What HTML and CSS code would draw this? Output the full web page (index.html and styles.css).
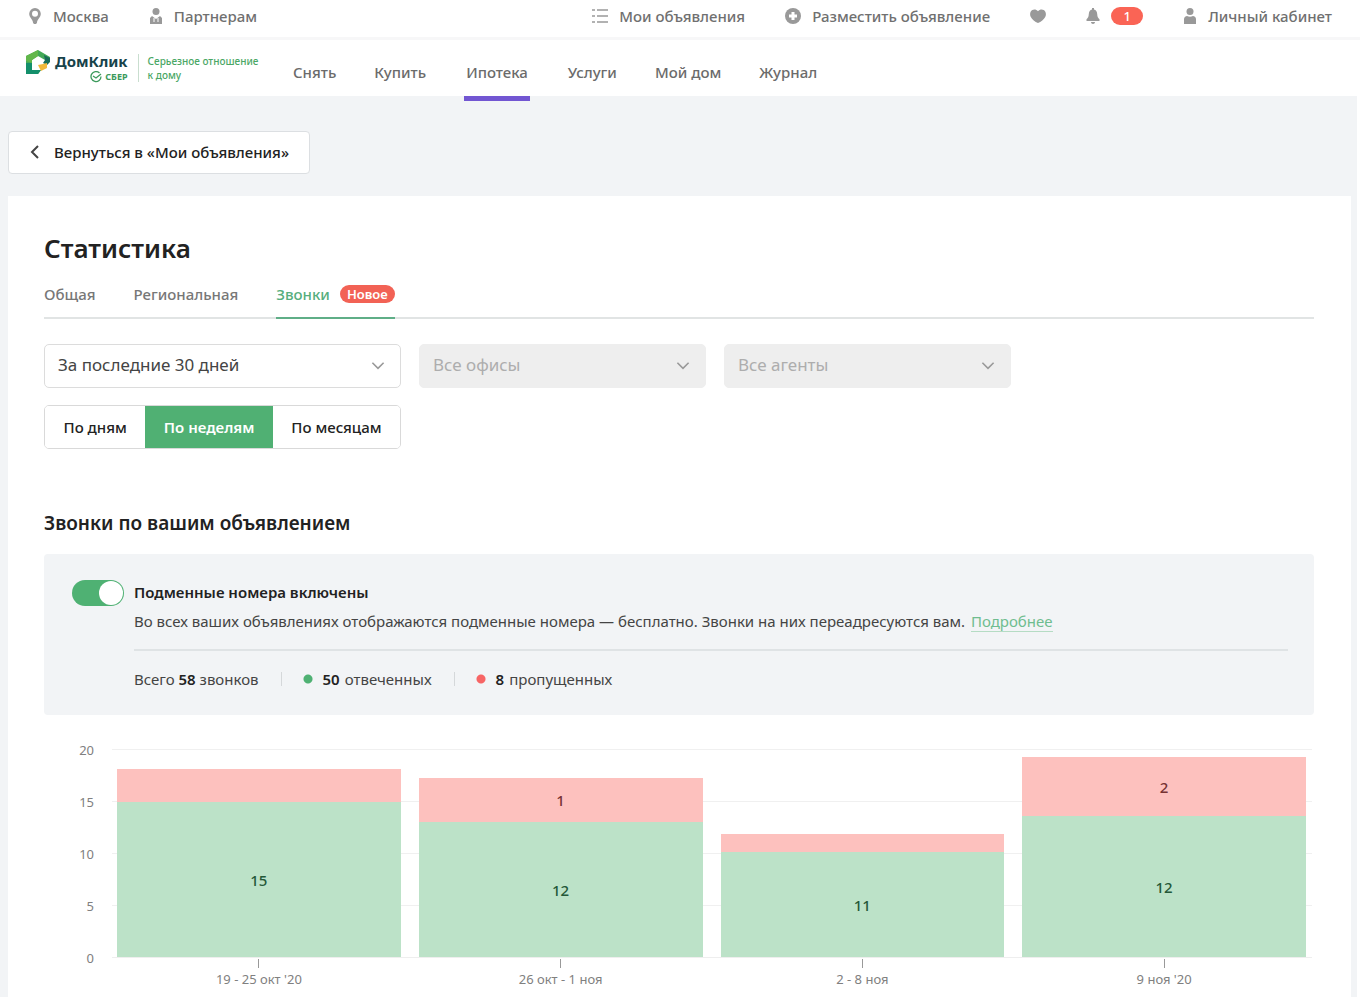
FILE: index.html
```html
<!DOCTYPE html>
<html lang="ru">
<head>
<meta charset="utf-8">
<meta name="viewport" content="width=device-width, initial-scale=1">
<title>ДомКлик — Статистика</title>
<link rel="stylesheet" href="styles.css">
</head>
<body>
<header>
  <div class="topbar">
    <a class="toplink" href="#"><svg width="14" height="16" viewBox="0 0 14 16"><path fill="#999" fill-rule="evenodd" d="M7 0a5.800 5.800 0 0 1 5.800 5.800C12.800 9.500 9.300 11.500 9 14.500c0 .9-.7 1.500-2 1.500s-2-.6-2-1.500C4.700 11.500 1.200 9.500 1.200 5.800A5.800 5.800 0 0 1 7 0zm0 2.800a3 3 0 1 0 0 6 3 3 0 0 0 0-6z"/></svg>Москва</a>
    <a class="toplink" href="#"><svg width="14" height="16" viewBox="0 0 14 16"><circle cx="7" cy="3.500" r="3.500" fill="#999"/><path fill="#999" d="M3 8l4 3 4-3 2 2v6H1v-6z"/><path d="M5 10v4M9 10v4" stroke="#fff"/></svg>Партнерам</a>
    <nav class="account">
      <a class="toplink" href="#"><svg width="16" height="16" viewBox="0 0 16 16"><path d="M0 2h3M0 8h3M0 14h3M5 2h11M5 8h11M5 14h11" stroke="#999" stroke-width="1.500"/></svg>Мои объявления</a>
      <a class="toplink" href="#"><svg width="16" height="16" viewBox="0 0 16 16"><circle cx="8" cy="8" r="8" fill="#999"/><path d="M8 4v8M4 8h8" stroke="#fff" stroke-width="3"/></svg>Разместить объявление</a>
      <a class="toplink" href="#" aria-label="Избранное"><svg width="16" height="14" viewBox="0 0 16 14"><path fill="#999" d="M8 2.200C9.500.3 12 0 13.700 1c2.300 1.400 2.800 4.500 1.500 7C14 10.500 11 13 8 14 5 13 2 10.500.8 8-.5 5.500 0 2.400 2.300 1 4 0 6.500.3 8 2.200z"/></svg></a>
      <a class="toplink" href="#" aria-label="Уведомления: 1"><svg width="14" height="16" viewBox="0 0 14 16"><path fill="#999" d="M6 0h2v1.500c2 .4 3 2 3.200 4.500.2 3 .8 4 2.300 5.200V13H.5v-1.800C2 10 2.600 9 2.800 6 3 3.500 4 1.900 6 1.500zM5 14h4c0 2.500-4 2.500-4 0z"/></svg><span class="count">1</span></a>
      <a class="toplink" href="#"><svg width="14" height="16" viewBox="0 0 14 16"><circle cx="7" cy="3.500" r="3.500" fill="#999"/><path fill="#999" d="M1 11c0-2 2-3 3-3 2 1 4 1 6 0 1 0 3 1 3 3v5H1z"/></svg>Личный кабинет</a>
    </nav>
  </div>
  <div class="mainbar">
    <a class="logo" href="#">
      <svg width="25" height="25" viewBox="0 0 25 25"><path d="M13 0L1 6v18h12l3-4H7V10l6-4 7 4 5 2V7z" fill="#43a957"/><path d="M1 13v11h12l3-4H7v-7z" fill="#148f6b"/><path d="M13 0L1 6v5l6 2v-3l6-4z" fill="#62b74b"/><path d="M19 5l6 3v4l-3 3-4-2 2-3z" fill="#176c58"/><path d="M13 15l5-1 4-1v5l-6 3z" fill="#f2b83b"/></svg>
      <span class="brand"><span class="name">ДомКлик</span><span class="sber"><svg width="12" height="12" viewBox="0 0 12 12"><path d="M9.500 2A5 5 0 1 0 11 5.500M3 5l3 2 5-4" fill="none" stroke="#3c9a5c" stroke-width="1.300"/></svg>СБЕР</span></span>
      <span class="slogan">Серьезное отношение<br>к дому</span>
    </a>
    <nav class="menu">
      <a href="#">Снять</a><a href="#">Купить</a><a class="current" href="#" aria-current="page">Ипотека</a><a href="#">Услуги</a><a href="#">Мой дом</a><a href="#">Журнал</a>
    </nav>
  </div>
</header>
<main>
  <button class="back" type="button"><svg width="10" height="14" viewBox="0 0 10 14"><path d="M8 1L2 7l6 6" fill="none" stroke="#444" stroke-width="2"/></svg>Вернуться в «Мои объявления»</button>
  <section class="card">
    <h1>Статистика</h1>
    <nav class="tabs">
      <a href="#">Общая</a><a href="#">Региональная</a><a class="active" href="#" aria-current="page">Звонки <span class="new">Новое</span></a>
    </nav>
    <div class="filters">
      <div class="select period"><select aria-label="Период"><option>За последние 30 дней</option></select><svg width="14" height="8" viewBox="0 0 16 10"><path d="M1 1l7 7 7-7" fill="none" stroke="#999" stroke-width="2"/></svg></div>
      <div class="select"><select aria-label="Офисы" disabled><option>Все офисы</option></select><svg width="14" height="8" viewBox="0 0 16 10"><path d="M1 1l7 7 7-7" fill="none" stroke="#999" stroke-width="2"/></svg></div>
      <div class="select"><select aria-label="Агенты" disabled><option>Все агенты</option></select><svg width="14" height="8" viewBox="0 0 16 10"><path d="M1 1l7 7 7-7" fill="none" stroke="#999" stroke-width="2"/></svg></div>
    </div>
    <div class="segments" role="group" aria-label="Группировка">
      <button type="button">По дням</button><button class="on" type="button" aria-pressed="true">По неделям</button><button type="button">По месяцам</button>
    </div>
    <h2>Звонки по вашим объявлением</h2>
    <div class="panel">
      <input class="toggle" id="numbers" type="checkbox" role="switch" checked>
      <div class="info">
        <label for="numbers">Подменные номера включены</label>
        <p>Во всех ваших объявлениях отображаются подменные номера — бесплатно. Звонки на них переадресуются вам. <a href="#">Подробнее</a></p>
        <ul class="totals">
          <li>Всего <b>58</b> звонков</li>
          <li class="answered"><b>50</b> отвеченных</li>
          <li class="missed"><b>8</b> пропущенных</li>
        </ul>
      </div>
    </div>
    <div class="chart">
      <div class="scale"><span>20</span><span>15</span><span>10</span><span>5</span><span>0</span></div>
      <div class="plot">
        <div class="bar"><div class="red" style="height:33px"></div><div class="green" style="height:155px">15</div></div>
        <div class="bar"><div class="red" style="height:44px">1</div><div class="green" style="height:135px">12</div></div>
        <div class="bar"><div class="red" style="height:18px"></div><div class="green" style="height:105px">11</div></div>
        <div class="bar"><div class="red" style="height:59px">2</div><div class="green" style="height:141px">12</div></div>
      </div>
      <div class="dates"><span>19 - 25 окт '20</span><span>26 окт - 1 ноя</span><span>2 - 8 ноя</span><span>9 ноя '20</span></div>
    </div>
  </section>
</main>
</body>
</html>
```
FILE: styles.css
```css
* { box-sizing: border-box; }
body { margin: 0; background: #fff; color: #222; font: 15px/20px "Noto Sans", "Open Sans", sans-serif; }
a { color: inherit; text-decoration: none; }
svg { display: block; flex: none; }
button, select { font: inherit; color: inherit; }

.topbar { display: flex; align-items: center; gap: 40px; height: 40px; padding: 0 28px 5px; border-bottom: 3px solid #f7f7f8; color: #707070; font-weight: 500; }
.toplink { display: flex; align-items: center; gap: 11px; }
.account { display: flex; align-items: center; gap: 40px; margin-left: auto; }
.count { width: 32px; border-radius: 9px; background: #fa6455; color: #fff; font-size: 13px; line-height: 18px; text-align: center; }

.mainbar { display: flex; height: 56px; padding-left: 25px; }
.logo { display: flex; align-items: flex-start; gap: 5px; width: 268px; padding-top: 10px; }
.brand { display: flex; flex-direction: column; padding-top: 2px; color: #17434a; }
.name { font-size: 15px; line-height: 19px; font-weight: 700; }
.sber { display: flex; align-items: center; justify-content: flex-end; gap: 3px; color: #3c9a5c; font-size: 9px; line-height: 12px; font-weight: 700; }
.slogan { margin: 4px 0 0 5px; padding-left: 9px; border-left: 1px solid #c9decf; color: #4aa765; font-size: 10px; line-height: 14px; font-weight: 500; }
.menu { display: flex; gap: 38px; color: #6b6b6b; font-weight: 500; }
.menu a { height: 61px; padding-top: 22px; }
.menu .current { padding-right: 2px; padding-left: 2px; border-bottom: 5px solid #7256d2; }

main { margin-right: 3px; padding: 35px 6px 0 8px; background: #f2f4f6; }
.back { display: flex; align-items: center; gap: 14px; height: 43px; padding: 0 20px 1px 21px; border: 1px solid #dcdfe2; border-radius: 4px; background: #fff; font-weight: 500; }
.card { margin-top: 22px; padding: 36px 37px 8px 36px; background: #fff; }
h1 { margin: 0; font-size: 26px; line-height: 32px; font-weight: 600; }
.tabs { display: flex; gap: 38px; margin-top: 20px; border-bottom: 2px solid #e1e4e4; color: #777; font-weight: 500; }
.tabs a { display: flex; gap: 10px; height: 35px; margin-bottom: -2px; }
.tabs .active { border-bottom: 2px solid #5fae87; color: #56ae7d; }
.new { align-self: flex-start; margin-top: 1px; padding: 0 7px; border-radius: 9px; background: #f26255; color: #fff; font-size: 13px; line-height: 18px; font-weight: 600; }
.filters { display: flex; gap: 18px; margin-top: 25px; }
.select { display: grid; width: 287px; height: 44px; align-items: center; font-size: 17px; }
.period { width: 357px; }
.select select { grid-area: 1 / 1; width: 100%; height: 100%; padding: 0 13px 2px; appearance: none; border: 1px solid #dcdcdc; border-radius: 5px; background: #fff; color: #444; opacity: 1; }
.select select:disabled { border-color: #eee; background: #eee; color: #adadad; }
.select svg { grid-area: 1 / 1; justify-self: end; margin-right: 16px; pointer-events: none; }
.segments { display: flex; width: 357px; height: 44px; margin-top: 17px; border: 1px solid #d9d9d9; border-radius: 5px; overflow: hidden; }
.segments button { flex: 1 0 auto; padding: 0; border: 0; background: #fff; font-weight: 500; }
.segments .on { background: #50b073; color: #fff; font-weight: 600; }
h2 { margin: 61px 0 0; font-size: 19px; line-height: 26px; font-weight: 600; }
.panel { display: flex; gap: 10px; margin-top: 18px; padding: 26px 26px 26px 28px; border-radius: 4px; background: #f2f4f6; }
.toggle { flex: none; width: 52px; height: 26px; margin: 0; appearance: none; border-radius: 13px; background: #4fb173; }
.toggle::before { content: ""; display: block; width: 24px; height: 24px; margin: 1px 1px 1px 27px; border-radius: 50%; background: #fff; }
.info { flex: 1; }
.info label { display: block; padding-top: 2px; font-weight: 600; }
.info p { margin: 9px 0 0; padding-bottom: 18px; border-bottom: 2px solid #dfe3e5; color: #444; }
.info p a { margin-left: 2px; border-bottom: 1px solid #b5dcc4; color: #6fbd8f; }
.totals { display: flex; margin: 0; padding: 18px 0 0; list-style: none; color: #444; }
.totals b { color: #222; font-weight: 600; }
.answered, .missed { display: flex; align-items: center; gap: 5px; margin-left: 22px; }
.answered::before, .missed::before { content: ""; width: 31px; height: 14px; margin-right: 5px; border-left: 1px solid #d5d8da; background: radial-gradient(circle at 26px 7px, #4fb173 4px, transparent 5px); }
.missed::before { background: radial-gradient(circle at 26px 7px, #f76565 4px, transparent 5px); }

.chart { display: grid; grid-template-columns: 50px 1fr; column-gap: 18px; margin-top: 34px; padding-right: 2px; color: #808080; font-size: 13px; }
.scale { display: flex; flex-direction: column; gap: 32px; margin: -9px 0; text-align: right; }
.plot { display: grid; grid-template-columns: repeat(4, 1fr); gap: 18px; align-items: end; height: 209px; padding: 0 6px 0 5px; border-bottom: 1px solid #eee; background: repeating-linear-gradient(#f0f0f0 0 1px, transparent 1px 52px); }
.bar > div { display: flex; align-items: center; justify-content: center; font-size: 15px; font-weight: 500; }
.red { background: #fdc1be; color: #733; }
.green { background: #bce2c8; color: #245838; }
.dates { grid-column: 2; display: grid; grid-template-columns: repeat(4, 1fr); gap: 18px; padding: 0 6px 0 5px; }
.dates span { display: flex; flex-direction: column; align-items: center; }
.dates span::before { content: ""; width: 1px; height: 9px; margin-bottom: 1px; background: #999; }
```
